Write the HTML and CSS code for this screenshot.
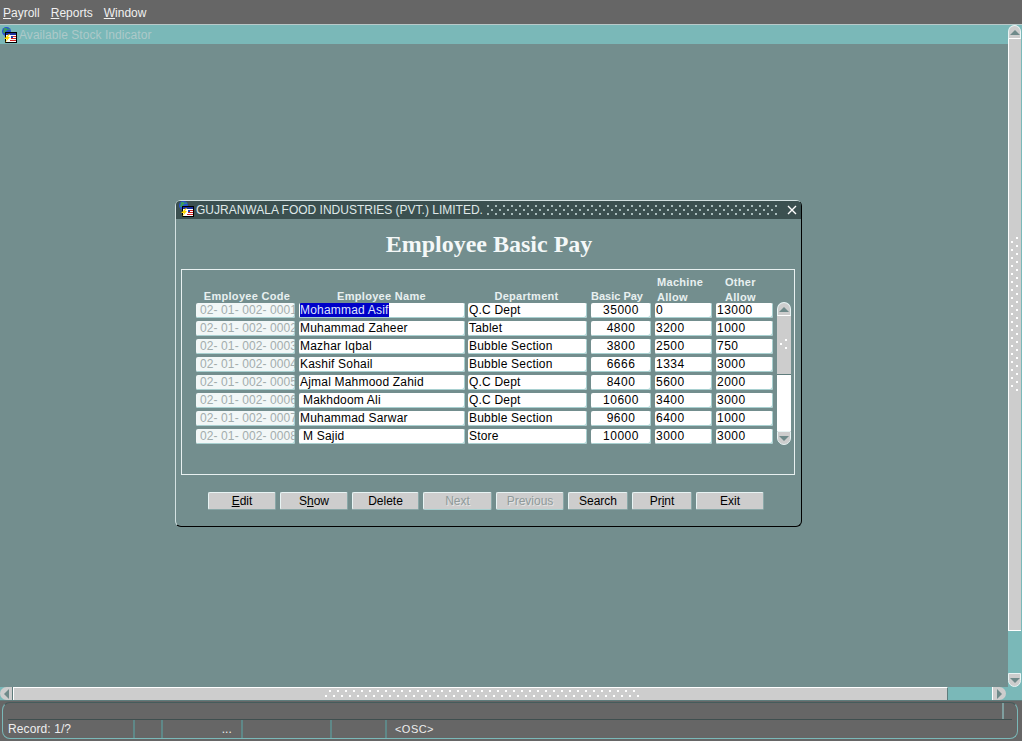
FILE: index.html
```html
<!DOCTYPE html>
<html lang="en">
<head>
<meta charset="utf-8">
<title>Employee Basic Pay</title>
<link rel="stylesheet" href="styles.css">
</head>
<body>
<svg class="defs" width="0" height="0" aria-hidden="true">
  <defs>
    <symbol id="app-icon" viewBox="0 0 16 16">
      <circle cx="5.5" cy="4.5" r="4.5" fill="#2450d0"/>
      <path d="M3 1h3l1 2-2 1-1 2H2zM8 1l1 2-2 0z" fill="#3a9a60"/>
      <path d="M4 5h12v11H4z" fill="#000"/>
      <path d="M5 6h10v9H5z" fill="#fff"/>
      <path d="M5 6h10v2H5z" fill="#1c2f9c"/>
      <path d="M10 9h2v2h-2z" fill="#1c3fb0"/>
      <path d="M12 9h3v1h-3zM10 11h5v1h-5zM9 13h6v1H9z" fill="#d02020"/>
      <path d="M8 7 3 12h3l-2 4 5-6H7l2-3z" fill="#ffd800"/>
    </symbol>
  </defs>
</svg>
<div class="app">
  <nav class="menubar">
    <span class="menu"><u>P</u>ayroll</span>
    <span class="menu"><u>R</u>eports</span>
    <span class="menu"><u>W</u>indow</span>
  </nav>
  <div class="mdi">
    <main class="workspace">
      <div class="mdi-title">
        <svg class="icon"><use href="#app-icon"/></svg>
        <span class="mdi-name">Available Stock Indicator</span>
      </div>
      <section class="dialog">
        <header class="dialog-title">
          <svg class="icon"><use href="#app-icon"/></svg>
          <span class="dialog-name">GUJRANWALA FOOD INDUSTRIES (PVT.) LIMITED.</span>
          <span class="dialog-dots"></span>
          <svg class="close" viewBox="0 0 10 10"><path d="M1 1l8 8M9 1l-8 8" stroke="#fff" stroke-width="1.4" fill="none"/></svg>
        </header>
        <h1 class="heading">Employee Basic Pay</h1>
        <div class="frame">
          <div class="table">
            <div class="grid head">
              <div class="h1 hcode">Employee Code</div>
              <div class="h1">Employee Name</div>
              <div class="h1 hdept">Department</div>
              <div class="h1 hpay">Basic Pay</div>
              <div class="left">Machine<br>Allow</div>
              <div class="left">Other<br>Allow</div>
            </div>
            <div class="body">
              <div class="rows">
                <div class="grid row"><div class="f code">02- 01- 002- 0001</div><div class="f name"><span class="sel">Mohammad Asif</span></div><div class="f">Q.C Dept</div><div class="f n num">35000</div><div class="f n">0</div><div class="f n">13000</div></div>
                <div class="grid row"><div class="f code">02- 01- 002- 0002</div><div class="f name">Muhammad Zaheer</div><div class="f">Tablet</div><div class="f n num">4800</div><div class="f n">3200</div><div class="f n">1000</div></div>
                <div class="grid row"><div class="f code">02- 01- 002- 0003</div><div class="f name">Mazhar Iqbal</div><div class="f">Bubble Section</div><div class="f n num">3800</div><div class="f n">2500</div><div class="f n">750</div></div>
                <div class="grid row"><div class="f code">02- 01- 002- 0004</div><div class="f name">Kashif Sohail</div><div class="f">Bubble Section</div><div class="f n num">6666</div><div class="f n">1334</div><div class="f n">3000</div></div>
                <div class="grid row"><div class="f code">02- 01- 002- 0005</div><div class="f name">Ajmal Mahmood Zahid</div><div class="f">Q.C Dept</div><div class="f n num">8400</div><div class="f n">5600</div><div class="f n">2000</div></div>
                <div class="grid row"><div class="f code">02- 01- 002- 0006</div><div class="f name indent">Makhdoom Ali</div><div class="f">Q.C Dept</div><div class="f n num">10600</div><div class="f n">3400</div><div class="f n">3000</div></div>
                <div class="grid row"><div class="f code">02- 01- 002- 0007</div><div class="f name">Muhammad Sarwar</div><div class="f">Bubble Section</div><div class="f n num">9600</div><div class="f n">6400</div><div class="f n">1000</div></div>
                <div class="grid row"><div class="f code">02- 01- 002- 0008</div><div class="f name indent">M Sajid</div><div class="f">Store</div><div class="f n num">10000</div><div class="f n">3000</div><div class="f n">3000</div></div>
              </div>
              <div class="tscroll">
                <div class="sbtn top"><i class="tri up"></i></div>
                <div class="tthumb"><i class="tdots"></i></div>
                <div class="ttrack"></div>
                <div class="sbtn bottom"><i class="tri down"></i></div>
              </div>
            </div>
          </div>
        </div>
        <div class="buttons">
          <button class="btn"><u>E</u>dit</button>
          <button class="btn">S<u>h</u>ow</button>
          <button class="btn">Delete</button>
          <button class="btn off">Next</button>
          <button class="btn off">Previous</button>
          <button class="btn">Search</button>
          <button class="btn">Pr<u>i</u>nt</button>
          <button class="btn end">Exit</button>
        </div>
      </section>
    </main>
    <aside class="vscroll">
      <div class="sbtn top"><i class="tri up"></i></div>
      <div class="vthumb"><i class="vdots"></i></div>
      <div class="vtrack"></div>
      <div class="sbtn bottom"><i class="tri down"></i></div>
    </aside>
  </div>
  <div class="hscroll">
    <div class="hbtn lft"><i class="tri left-a"></i></div>
    <div class="hthumb"><i class="hdots"></i></div>
    <div class="htrack"></div>
    <div class="hbtn rgt"><i class="tri right-a"></i></div>
    <div class="hend"></div>
  </div>
  <footer class="status">
    <div class="status-in">
      <div class="status-top"><i class="status-tick"></i></div>
      <div class="status-bottom">
        <span class="c c1">Record: 1/?</span>
        <span class="c c2"></span>
        <span class="c c3">...</span>
        <span class="c c4"></span>
        <span class="c c5"></span>
        <span class="c c6">&lt;OSC&gt;</span>
      </div>
    </div>
  </footer>
</div>
</body>
</html>
```
FILE: styles.css
```css
* { box-sizing: border-box; }
html, body { margin: 0; padding: 0; }
body { width: 1022px; height: 741px; overflow: hidden; font: 12px/15px "Liberation Sans", Arial, sans-serif; color: #000; background: #738e8e; }
.defs { position: absolute; }
u { text-decoration: underline; }
.app { display: flex; flex-direction: column; height: 741px; }

.menubar { height: 24px; background: #666; color: #f0f0f0; display: flex; gap: 11px; padding: 6px 0 0 3px; }

.mdi { height: 663px; display: flex; border-top: 1px solid #b9c9c9; }
.workspace { width: 1008px; position: relative; background: #738e8e; }
.mdi-title { height: 19px; background: #7ab8b8; color: #adc9c9; display: flex; align-items: flex-start; gap: 2px; padding: 2px 0 0 1px; letter-spacing: .05px; }
.mdi-name { margin-top: 1px; }
.icon { width: 16px; height: 16px; flex: none; }

.vscroll { width: 14px; background: #7ab8b8; display: flex; flex-direction: column; }
.sbtn { height: 14px; background: #cdcdcd; display: flex; align-items: center; justify-content: center; border: 1px solid #e8f4f4; width: 13px; }
.sbtn.top { border-radius: 7px 7px 0 0; border-bottom: 1px solid #fff; }
.sbtn.bottom { border-radius: 0 0 7px 7px; }
.tri { width: 0; height: 0; display: block; border: 5px solid transparent; }
.tri.up { border-bottom-color: #6f8a8a; border-top-width: 0; }
.tri.down { border-top-color: #6f8a8a; border-bottom-width: 0; }
.tri.left-a { border-right-color: #6f8a8a; border-left-width: 0; }
.tri.right-a { border-left-color: #6f8a8a; border-right-width: 0; }
.vthumb { height: 592px; width: 13px; background: #cdcdcd; border-left: 1px solid #fff; border-bottom: 1px solid #fff; padding-top: 198px; }
.vdots { display: block; height: 154px; margin-left: 2px; background-image: radial-gradient(circle at 1px 1px, #fff 1.2px, transparent 1.3px), radial-gradient(circle at 1px 1px, #fff 1.2px, transparent 1.3px); background-size: 10px 8px; background-position: 0 4px, 5px 0; }
.vtrack { flex: 1; }

.hscroll { height: 14px; background: #7ab8b8; display: flex; border-bottom: 1px solid #5f7c7c; }
.hbtn { width: 14px; background: #cdcdcd; display: flex; align-items: center; justify-content: center; }
.hbtn.lft { width: 13px; border-radius: 7px 0 0 7px; border-right: 1px solid #5f7c7c; }
.hbtn.rgt { border-radius: 0 7px 7px 0; border-left: 1px solid #fff; }
.hthumb { width: 935px; background: #cdcdcd; border-top: 1px solid #fff; border-left: 1px solid #fff; border-right: 1px solid #5f7c7c; padding-left: 311px; }
.hdots { display: block; width: 316px; height: 9px; margin-top: 2px; background-image: radial-gradient(circle at 1px 1px, #fff 1.2px, transparent 1.3px), radial-gradient(circle at 1px 1px, #fff 1.2px, transparent 1.3px); background-size: 8px 9px; background-position: 4px 0, 0 5px; background-repeat: repeat-x; }
.htrack { width: 44px; }
.hend { flex: 1; }

.status { flex: 1; background: #666; color: #eee; padding: 1px 4px 2px 2px; }
.status-in { height: 37px; border: 1px solid #7ab8b8; border-top-color: #455c5c; border-radius: 8px; padding-left: 5px; display: flex; flex-direction: column; }
.status-top { height: 17px; border-bottom: 1px solid #3f4f4f; display: flex; justify-content: flex-end; margin-right: 5px; padding-right: 8px; }
.status-tick { width: 2px; background: #7f9f9f; }
.status-bottom { flex: 1; display: flex; line-height: 17px; letter-spacing: .1px; }
.c { border-right: 2px solid #5f8888; display: block; }
.c1 { width: 127px; padding-top: 1px; }
.c2 { width: 28px; }
.c3 { width: 80px; text-align: right; padding-right: 9px; padding-top: 1px; }
.c4 { width: 89px; }
.c5 { width: 55px; }
.c6 { border: 0; padding-left: 8px; padding-top: 1px; font-size: 11px; letter-spacing: .45px; }

.dialog { position: absolute; left: 175px; top: 175px; width: 627px; height: 327px; background: #738e8e; border: 1px solid; border-color: #d4e2e2 #000 #000 #d4e2e2; border-radius: 6px; display: flex; flex-direction: column; }
.dialog-title { height: 18px; background: #3b5050; border-radius: 4px 4px 0 0; display: flex; align-items: center; color: #dfe8e8; padding-left: 2px; }
.dialog-title .icon { margin: 0 2px 0 0; align-self: flex-start; }
.dialog-name { width: 291px; white-space: nowrap; }
.dialog-dots { width: 292px; height: 11px; background-image: radial-gradient(circle at 1px 1px, #a8bcbc .8px, transparent 1px), radial-gradient(circle at 1px 1px, #a8bcbc .8px, transparent 1px); background-size: 8px 8px; background-position: 0 0, 4px 4px; }
.close { width: 10px; height: 10px; margin-left: 8px; }
.heading { margin: 0; height: 50px; padding-top: 12px; padding-left: 1px; text-align: center; font: bold 24px/26px "Liberation Serif", "Times New Roman", serif; color: #f4f8f8; }
.frame { margin-left: 5px; width: 614px; height: 206px; border: 1px solid #e8f0f0; padding: 5px 0 0 14px; }
.grid { display: grid; grid-template-columns: 99px 165px 119px 60px 57px 57px; column-gap: 4px; }
.head { height: 28px; align-items: end; color: #e8f0f0; font-weight: bold; font-size: 11px; line-height: 15px; text-align: center; letter-spacing: .3px; }
.h1 { padding-bottom: 1px; white-space: nowrap; }
.hcode { padding-left: 3px; }
.hdept { padding-right: 2px; }
.hpay { padding-right: 8px; letter-spacing: 0; }
.head .left { text-align: left; padding-left: 2px; }
.head .left:last-child { padding-left: 9px; }
.body { display: flex; gap: 4px; }
.rows { display: flex; flex-direction: column; gap: 3px; }
.row { height: 15px; }
.f { background: #fff; border-radius: 2px; box-shadow: inset -1px -1px 0 #a8d0d0; padding: 0 1px; white-space: nowrap; overflow: hidden; letter-spacing: .2px; line-height: 15px; }
.f.n { letter-spacing: .48px; }
.name { margin-right: -1px; }
.code { background: #f2f7f7; color: #a3adad; padding-left: 4px; letter-spacing: .1px; }
.indent { padding-left: 4px; }
.num { text-align: center; }
.sel { background: #0000c8; color: #dfe4ff; display: inline-block; height: 14px; }
.tscroll { width: 14px; height: 143px; margin-top: -1px; display: flex; flex-direction: column; border-radius: 7px; }
.tscroll .sbtn { width: 14px; }
.tthumb { height: 59px; background: #cdcdcd; border-bottom: 1px solid #5f7c7c; padding: 23px 3px 0; }
.tdots { display: block; width: 8px; height: 10px; background-image: radial-gradient(circle at 1px 1px, #fff 1.2px, transparent 1.3px), radial-gradient(circle at 1px 1px, #fff 1.2px, transparent 1.3px); background-size: 10px 8px; background-position: 0 4px, 5px 0; }
.ttrack { flex: 1; background: #fff; }

.buttons { display: grid; grid-template-columns: 72px 72px 71px 73px 72px 64px 64px 68px; margin: 17px 0 0 32px; }
.btn { height: 18px; margin: 0 4px 0 0; padding: 0; border: 0; border-top: 1px solid #e8f4f4; border-left: 1px solid #e8f4f4; border-right: 1px solid #8aa8a8; border-bottom: 1px solid #8aa8a8; border-radius: 2px; background: #cdcdcd; color: #000; font: 12px/15px "Liberation Sans", Arial, sans-serif; }
.btn.off { color: #8f9a9a; text-shadow: 1px 1px 0 #e4e4e4; border-bottom-color: #a8d0d0; }
.btn.end { margin-right: 0; }
```
